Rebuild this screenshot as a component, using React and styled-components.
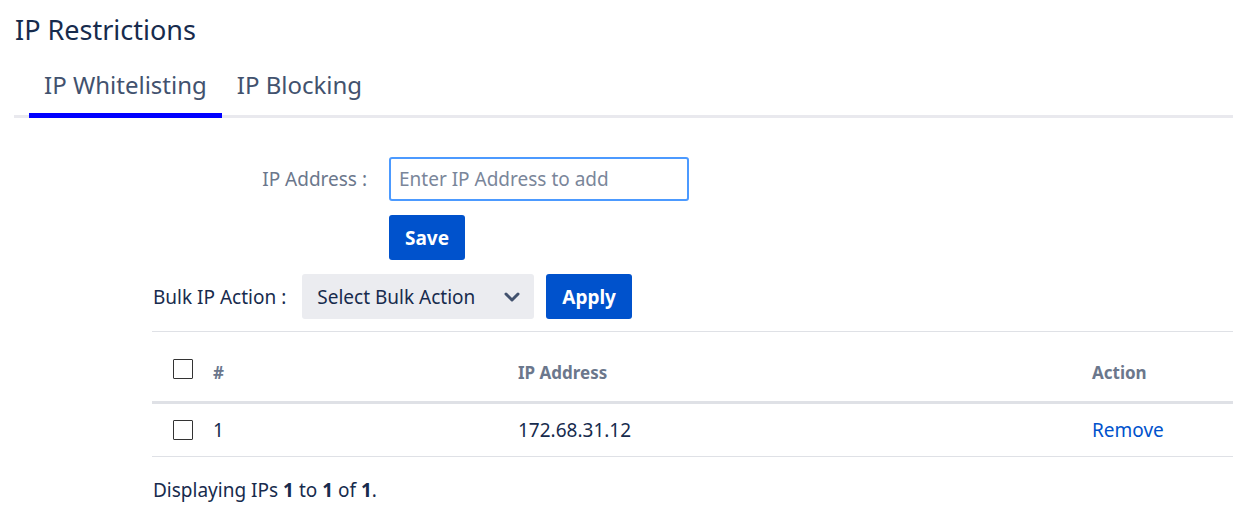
import React from 'react'
import styled, { createGlobalStyle } from 'styled-components'

const GlobalStyle = createGlobalStyle`
  body {
    margin: 0;
    background: #fff;
    font-family: "Noto Sans", "Open Sans", sans-serif;
    color: #172b4d;
  }
`

const Page = styled.div`
  padding: 10px 0 0 14px;
`

const Title = styled.h1`
  margin: 0 0 0 1px;
  font-size: 27px;
  font-weight: 400;
  line-height: 40px;
  color: #172b4d;
`

const TabBar = styled.div`
  display: flex;
  padding-left: 15px;
  margin-top: 10px;
  border-bottom: 3px solid #e9e9ee;
`

const Tab = styled.div`
  padding: 0 15px;
  height: 53px;
  line-height: 50px;
  font-size: 24px;
  color: #42526e;
  margin-bottom: -3px;
  border-bottom: 5px solid ${p => (p.active ? '#0000ff' : 'transparent')};
`

const Section = styled.div`
  margin-left: 138px;
  padding-top: 39px;
`

const FormRow = styled.div`
  display: grid;
  grid-template-columns: 215px 300px;
  column-gap: 22px;
  align-items: center;
`

const Label = styled.label`
  text-align: right;
  font-size: 19px;
  color: #6b778c;
`

const Input = styled.input`
  box-sizing: border-box;
  height: 44px;
  width: 300px;
  border: 2px solid #4c9aff;
  border-radius: 3px;
  padding: 0 8px;
  font-family: inherit;
  font-size: 19px;
  color: #172b4d;
  outline: none;
  &::placeholder {
    color: #7a869a;
  }
`

const Button = styled.button`
  box-sizing: border-box;
  height: 45px;
  padding: 0 16px;
  border: none;
  border-radius: 3px;
  background: #0052cc;
  color: #fff;
  font-family: inherit;
  font-size: 19px;
  font-weight: 700;
`

const SaveRow = styled.div`
  padding: 14px 0 14px 237px;
`

const BulkRow = styled.div`
  display: flex;
  align-items: center;
  gap: 12px;
`

const BulkLabel = styled.span`
  font-size: 19px;
  color: #172b4d;
  margin: 0 4px 0 1px;
`

const Select = styled.div`
  box-sizing: border-box;
  display: flex;
  align-items: center;
  justify-content: space-between;
  width: 232px;
  height: 45px;
  padding: 0 12px 0 15px;
  border-radius: 3px;
  background: #ebecf0;
  font-size: 19px;
  color: #172b4d;
`

const Table = styled.div`
  margin-top: 12px;
  border-top: 1px solid #dfe1e6;
`

const Row = styled.div`
  display: grid;
  grid-template-columns: 61px 305px 574px 1fr;
  align-items: center;
  height: ${p => (p.head ? '69px' : '52px')};
  border-bottom: ${p => (p.head ? '3px solid #dfe1e6' : '1px solid #dfe1e6')};
`

const Cell = styled.div`
  font-size: ${p => (p.head ? '17px' : '19px')};
  font-weight: ${p => (p.head ? 700 : 400)};
  color: ${p => (p.head ? '#6b778c' : '#172b4d')};
  padding-top: ${p => (p.head ? '12px' : '0')};
`

const CheckCell = styled.div`
  padding-left: 21px;
  padding-top: ${p => (p.head ? '5px' : '0')};
`

const Box = styled.span`
  display: block;
  box-sizing: border-box;
  width: 20px;
  height: 20px;
  border: 1.5px solid #333;
  border-radius: 1px;
`

const Link = styled.a`
  color: #0052cc;
  text-decoration: none;
`

const Footer = styled.p`
  margin: 20px 0 0 1px;
  font-size: 19px;
  color: #172b4d;
`

const Chevron = () => (
  <svg width="20" height="20" viewBox="0 0 20 20">
    <path d="M4 7l6 6 6-6" fill="none" stroke="#42526e" strokeWidth="3" strokeLinecap="round" strokeLinejoin="round" />
  </svg>
)

const App = () => (
  <>
    <GlobalStyle />
    <Page>
      <Title>IP Restrictions</Title>
      <TabBar>
        <Tab active>IP Whitelisting</Tab>
        <Tab>IP Blocking</Tab>
      </TabBar>
      <Section>
        <FormRow>
          <Label>IP Address :</Label>
          <Input placeholder="Enter IP Address to add" />
        </FormRow>
        <SaveRow>
          <Button>Save</Button>
        </SaveRow>
        <BulkRow>
          <BulkLabel>Bulk IP Action :</BulkLabel>
          <Select>
            Select Bulk Action
            <Chevron />
          </Select>
          <Button>Apply</Button>
        </BulkRow>
        <Table>
          <Row head>
            <CheckCell head><Box /></CheckCell>
            <Cell head>#</Cell>
            <Cell head>IP Address</Cell>
            <Cell head>Action</Cell>
          </Row>
          <Row>
            <CheckCell><Box /></CheckCell>
            <Cell>1</Cell>
            <Cell>172.68.31.12</Cell>
            <Cell><Link href="#">Remove</Link></Cell>
          </Row>
        </Table>
        <Footer>
          Displaying IPs <b>1</b> to <b>1</b> of <b>1</b>.
        </Footer>
      </Section>
    </Page>
  </>
)

export default App
